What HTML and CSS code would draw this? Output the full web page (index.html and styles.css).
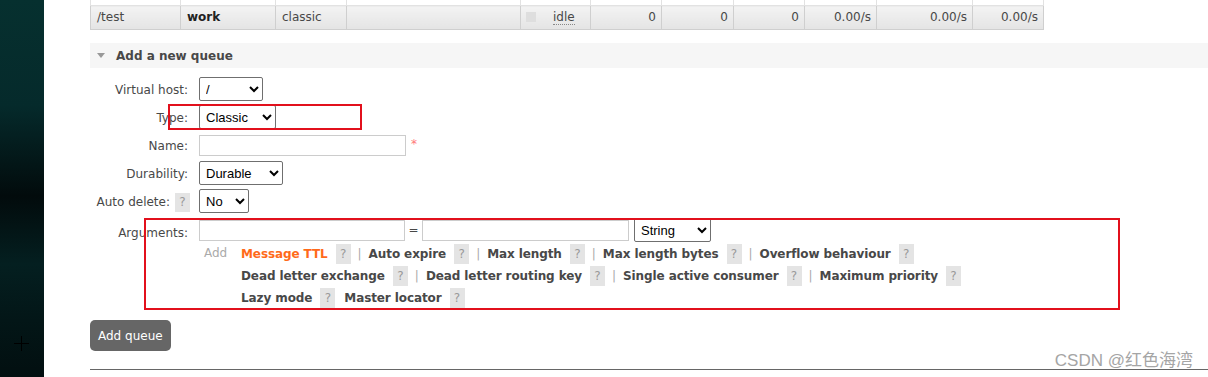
FILE: index.html
```html
<!DOCTYPE html>
<html lang="en">
<head>
  <meta charset="UTF-8">
  <title>Queues - RabbitMQ Management</title>
  <link rel="stylesheet" href="styles.css">
</head>
<body>

<div class="page">
  <!-- dark desktop strip on the left -->
  <aside class="sidebar"><span class="cursor"></span></aside>

  <main class="main">
    <table class="queues">
      <colgroup>
        <col style="width:90px"><col style="width:95px"><col style="width:71px"><col style="width:174px">
        <col style="width:70px"><col style="width:71px"><col style="width:72px"><col style="width:71px">
        <col style="width:72px"><col style="width:96px"><col style="width:71px">
      </colgroup>
      <tr class="prev">
        <td></td><td></td><td></td><td></td><td></td><td></td><td></td><td></td><td></td><td></td><td></td>
      </tr>
      <tr class="queue-row">
        <td>/test</td>
        <td class="name">work</td>
        <td>classic</td>
        <td></td>
        <td><span class="state-box"></span><abbr class="state">idle</abbr></td>
        <td class="num">0</td>
        <td class="num">0</td>
        <td class="num">0</td>
        <td class="num">0.00/s</td>
        <td class="num">0.00/s</td>
        <td class="num">0.00/s</td>
      </tr>
    </table>

    <div class="section-head"><span class="arrow"></span>Add a new queue</div>

    <form class="queue-form" onsubmit="return false">
      <div class="row">
        <label class="label">Virtual host:</label>
        <select class="sel sel-vhost"><option>/</option></select>
      </div>
      <div class="row">
        <label class="label">Type:</label>
        <select class="sel sel-type"><option>Classic</option></select>
      </div>
      <div class="row">
        <label class="label">Name:</label>
        <input type="text" class="txt txt-name"><span class="required">*</span>
      </div>
      <div class="row">
        <label class="label">Durability:</label>
        <select class="sel sel-durable"><option>Durable</option></select>
      </div>
      <div class="row">
        <label class="label">Auto delete:<span class="help">?</span></label>
        <select class="sel sel-auto"><option>No</option></select>
      </div>
      <div class="row row-args">
        <label class="label">Arguments:</label>
        <div class="args">
          <div class="arg-line">
            <input type="text" class="txt txt-key"><span class="eq">=</span><input type="text" class="txt txt-val">
            <select class="sel sel-kind"><option>String</option></select>
          </div>
          <div class="arg-extra">
            <span class="add">Add</span>
            <div class="arg-links">
              <div class="link-row">
                <span class="arg-link hot">Message TTL</span><span class="help">?</span><span class="sep">|</span>
                <span class="arg-link">Auto expire</span><span class="help">?</span><span class="sep">|</span>
                <span class="arg-link">Max length</span><span class="help">?</span><span class="sep">|</span>
                <span class="arg-link">Max length bytes</span><span class="help">?</span><span class="sep">|</span>
                <span class="arg-link">Overflow behaviour</span><span class="help">?</span>
              </div>
              <div class="link-row">
                <span class="arg-link">Dead letter exchange</span><span class="help">?</span><span class="sep">|</span>
                <span class="arg-link">Dead letter routing key</span><span class="help">?</span><span class="sep">|</span>
                <span class="arg-link">Single active consumer</span><span class="help">?</span><span class="sep">|</span>
                <span class="arg-link">Maximum priority</span><span class="help">?</span>
              </div>
              <div class="link-row">
                <span class="arg-link">Lazy mode</span><span class="help gap">?</span>
                <span class="arg-link">Master locator</span><span class="help">?</span>
              </div>
            </div>
          </div>
        </div>
      </div>
    </form>

    <button class="add-btn" type="button">Add queue</button>
    <hr class="divider">
  </main>

  <!-- screenshot annotations -->
  <div class="mark mark-type"></div>
  <div class="mark mark-args"></div>
  <div class="watermark">CSDN @红色海湾</div>
</div>

</body>
</html>
```

FILE: styles.css
```css
/* Basic styling */
body {
  margin: 0;
  padding: 0;
  background-color: #fff;
  font-family: 'DejaVu Sans', Verdana, sans-serif;
  font-size: 12px;
  color: #484848;
  overflow: hidden;
}
.page {
  position: relative;
  display: flex;
  height: 377px;
}

/* Left strip */
.sidebar {
  position: relative;
  flex: none;
  width: 44px;
  background: linear-gradient(#06302f 0%, #052a2b 28%, #020b0c 52%, #041f20 70%, #031617 85%, #020f10 100%);
}
.cursor {
  position: absolute;
  left: 14px;
  top: 336px;
  width: 15px;
  height: 15px;
}
.cursor::before,
.cursor::after {
  content: '';
  position: absolute;
  background-color: #000;
}
.cursor::before {
  left: 7px;
  top: 0;
  width: 1px;
  height: 15px;
}
.cursor::after {
  left: 0;
  top: 7px;
  width: 15px;
  height: 1px;
}

.main {
  flex: 1;
  margin-left: 46px;
}

/* Queue table */
.queues {
  width: 954px;
  table-layout: fixed;
  border-collapse: collapse;
}
.queues td {
  border: 1px solid #d4d4d4;
  padding: 0 6px;
  white-space: nowrap;
}
.queues .prev td {
  height: 5px;
  padding: 0;
  border-top: none;
  border-color: #e2e2e2;
  background-color: #fff;
}
.queue-row td {
  height: 23px;
  line-height: 23px;
  background: linear-gradient(#f3f3f3, #e4e4e4);
  border-color: #cfcfcf;
}
.queue-row .name {
  font-weight: bold;
  color: #222;
}
.queue-row .num {
  text-align: right;
  padding-right: 5px;
}
.state-box {
  display: inline-block;
  width: 10px;
  height: 10px;
  margin-left: -1px;
  vertical-align: -1px;
  background-color: #dedede;
}
.state {
  margin-left: 17px;
  text-decoration: none;
  border-bottom: 1px dotted #888;
}

/* Section header */
.section-head {
  margin-top: 13px;
  height: 25px;
  line-height: 26px;
  padding-left: 7px;
  background-color: #f6f6f6;
  font-weight: bold;
  font-size: 12px;
  color: #484848;
}
.arrow {
  display: inline-block;
  width: 0;
  height: 0;
  margin-right: 11px;
  border-left: 4px solid transparent;
  border-right: 4px solid transparent;
  border-top: 5px solid #999;
  vertical-align: 2px;
}

/* Form */
.queue-form {
  margin-top: 9px;
  display: flex;
  flex-direction: column;
  gap: 4px;
}
.row {
  display: flex;
  align-items: center;
  height: 24px;
}
.row-args {
  height: auto;
  align-items: flex-start;
  margin-top: 1px;
}
.label {
  flex: none;
  width: 98px;
  margin-right: 11px;
  text-align: right;
  line-height: 24px;
  padding-top: 1px;
  white-space: nowrap;
}
.row-args .label {
  padding-top: 3px;
}
.sel {
  height: 24px;
  font-family: 'Liberation Sans', Arial, sans-serif;
  font-size: 13px;
  color: #000;
  background-color: #fff;
  border: 1px solid #6f6f6f;
  border-radius: 2px;
  padding: 0 2px;
}
.sel-vhost { width: 64px; }
.sel-type { width: 77px; }
.sel-durable { width: 84px; }
.sel-auto { width: 50px; }
.sel-kind { width: 77px; margin-left: 5px; }
.txt {
  box-sizing: border-box;
  height: 21px;
  border: 1px solid #ccc;
  padding: 0 3px;
  font-family: inherit;
  font-size: 12px;
}
.txt-name { width: 207px; }
.txt-key { width: 206px; }
.txt-val { width: 207px; }
.required {
  margin-left: 5px;
  margin-top: -3px;
  color: #f77;
  font-size: 12px;
  line-height: 12px;
  align-self: center;
}
.args {
  display: flex;
  flex-direction: column;
}
.arg-line {
  display: flex;
  align-items: center;
  height: 24px;
}
.eq {
  width: 17px;
  text-align: center;
}
.arg-extra {
  display: flex;
  margin-top: 1px;
}
.add {
  flex: none;
  width: 37px;
  padding-left: 5px;
  color: #aaa;
  line-height: 20px;
}
.link-row {
  height: 22px;
  display: flex;
  align-items: center;
  white-space: nowrap;
}
.arg-link {
  font-weight: bold;
  color: #484848;
  letter-spacing: -0.1px;
}
.arg-link.hot {
  color: #ff6a1a;
}
.help {
  display: inline-block;
  width: 15px;
  height: 20px;
  line-height: 20px;
  margin-left: 8px;
  text-align: center;
  font-weight: normal;
  color: #999;
  background-color: #e4e4e4;
}
.label .help {
  height: 19px;
  line-height: 19px;
  margin-left: 5px;
  margin-right: -2px;
  vertical-align: middle;
}
.help.gap {
  margin-right: 9px;
}
.sep {
  margin: 0 7px;
  color: #aaa;
}

/* Button */
.add-btn {
  display: block;
  margin-top: 11px;
  height: 31px;
  padding: 0 8px;
  background-color: #666;
  color: #fff;
  border: none;
  border-radius: 5px;
  font-family: inherit;
  font-size: 12px;
  cursor: pointer;
}
.add-btn:hover {
  background-color: #444;
}
.divider {
  margin: 18px 0 0;
  border: none;
  border-top: 1px solid #666;
}

/* Annotations */
.mark {
  position: absolute;
  border: 2px solid #e2101c;
  box-sizing: border-box;
}
.mark-type {
  left: 168px;
  top: 104px;
  width: 194px;
  height: 26px;
}
.mark-args {
  left: 144px;
  top: 218px;
  width: 976px;
  height: 92px;
}
.watermark {
  position: absolute;
  right: 15px;
  top: 346px;
  font-family: 'Liberation Sans', 'Noto Sans CJK SC', sans-serif;
  font-size: 17px;
  color: #a5a5a5;
}
```
